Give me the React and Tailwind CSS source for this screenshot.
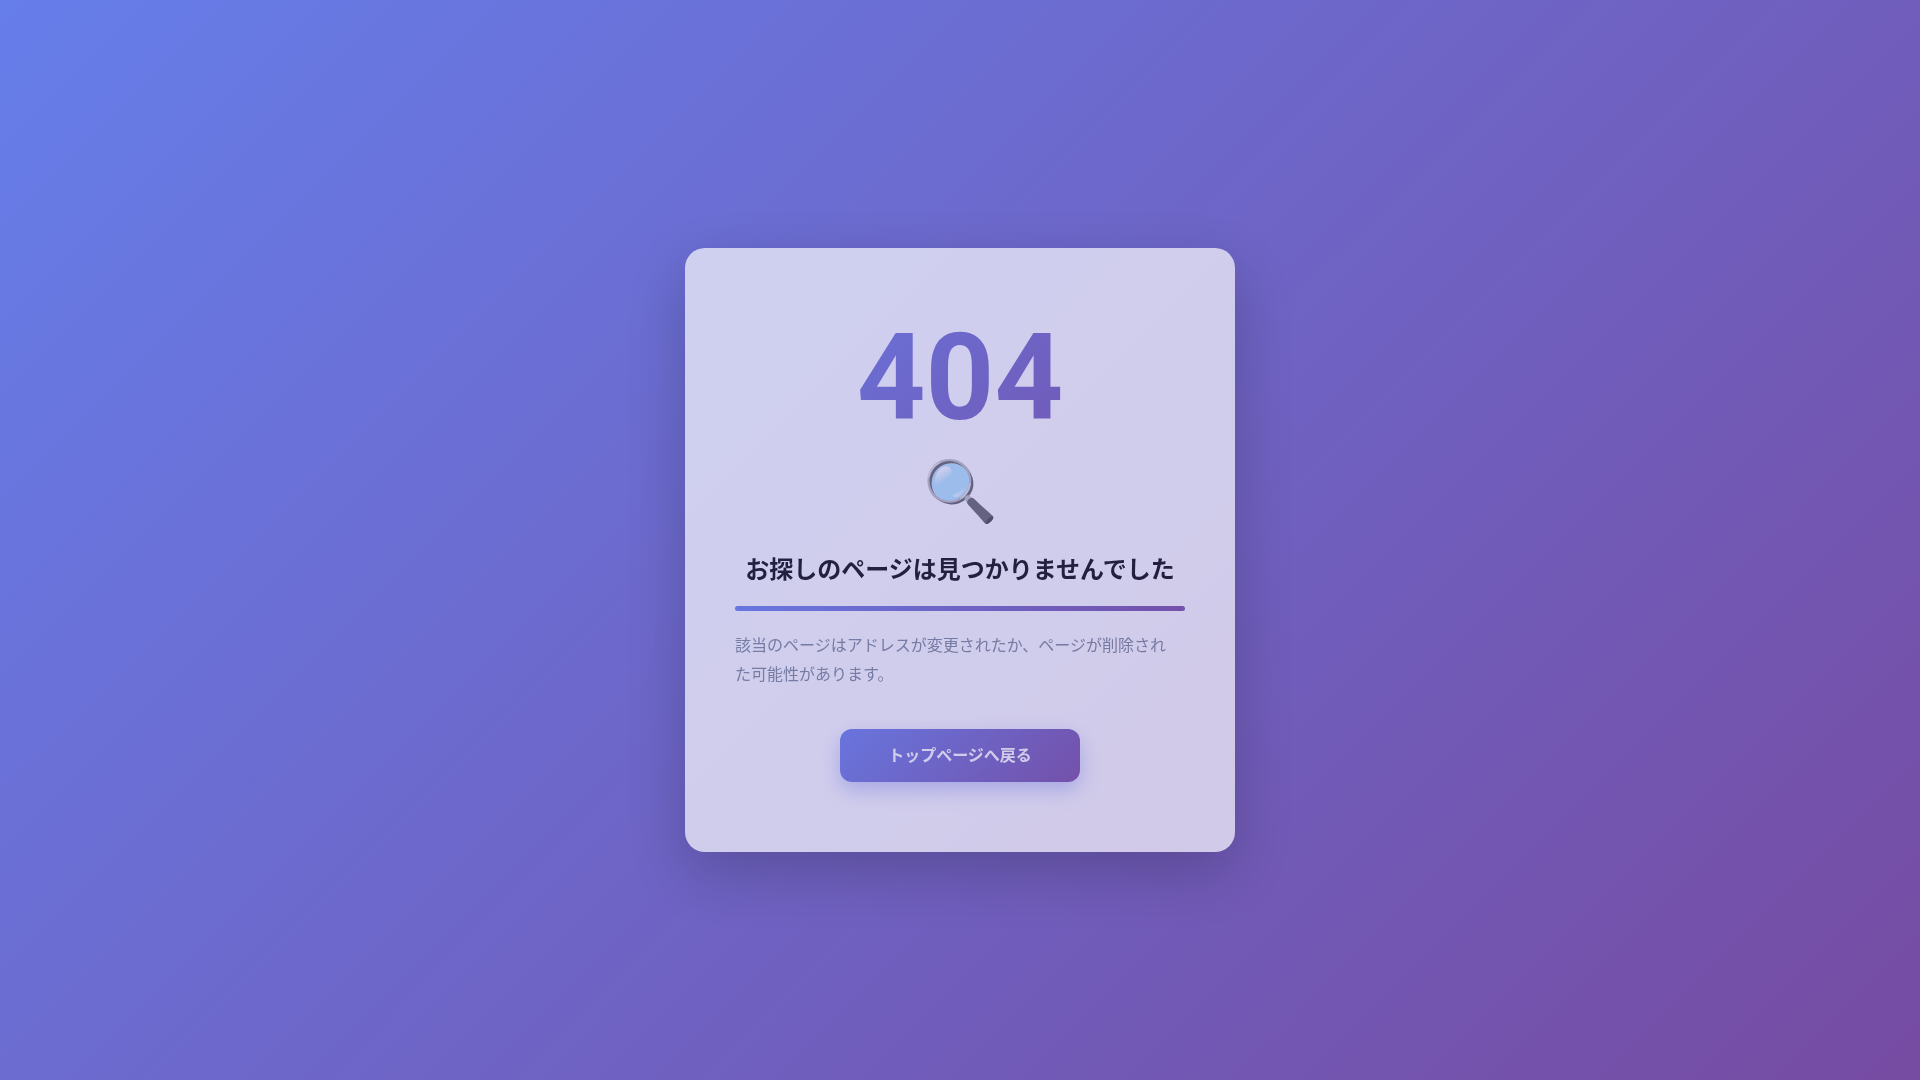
export default function App() {
  return (
    <main lang="ja" className="flex min-h-screen items-center justify-center bg-[linear-gradient(135deg,#667eea_0%,#764ba2_100%)] p-5 font-[Roboto,'Noto_Sans_CJK_JP',sans-serif]">
      <section className="mt-5 w-full max-w-[550px] rounded-[20px] bg-white px-[50px] pt-[60px] pb-[70px] text-center opacity-[.68] shadow-[0_20px_60px_rgba(0,0,0,0.3)]">
        <h1 className="mb-2 bg-[linear-gradient(135deg,#667eea_0%,#764ba2_100%)] bg-clip-text text-[120px] leading-[140px] font-bold text-transparent">404</h1>
        <div className="mb-6 text-[60px] leading-[72px]">🔍</div>
        <h2 className="text-2xl leading-9 font-bold text-black">お探しのページは見つかりませんでした</h2>
        <div className="mt-[18px] mb-5 h-[5px] rounded-sm bg-[linear-gradient(90deg,#667eea,#764ba2)]" />
        <p className="mb-10 pr-1 text-left text-base leading-[29px] text-[#7a8794]">該当のページはアドレスが変更されたか、ページが削除された可能性があります。</p>
        <a href="/" className="inline-block rounded-xl bg-[linear-gradient(135deg,#667eea_0%,#764ba2_100%)] px-12 py-[14px] text-base leading-[25px] font-semibold text-white shadow-[0_8px_20px_rgba(102,126,234,0.4)]">トップページへ戻る</a>
      </section>
    </main>
  );
}
